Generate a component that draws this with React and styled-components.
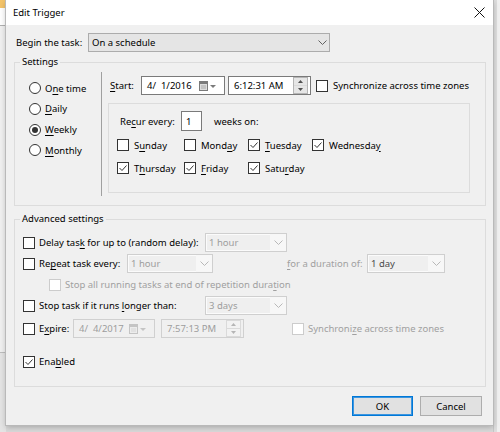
import styled, { createGlobalStyle } from "styled-components";

const GlobalStyle = createGlobalStyle`
  html, body { margin: 0; padding: 0; }
  body {
    font-family: "Noto Sans", Lato, sans-serif;
    font-size: 9.5px;
    color: #000;
    background: #d9d9d9;
  }
`;

const Screen = styled.div`
  width: 500px;
  height: 432px;
  display: flex;
  align-items: flex-start;
  overflow: hidden;
  background: #d9d9d9;
`;

const LeftStrip = styled.div`
  width: 6px;
  height: 432px;
  flex: none;
  background: linear-gradient(#f4c46a 0 8px, #fff 8px 25px, #b0b0b0 25px 26px, #f0f0f0 26px 352px, #bdbdbd 352px 353px, #e4e4e4 353px);
`;

const RightStrip = styled.div`
  width: 7px;
  height: 432px;
  flex: none;
  background: linear-gradient(90deg, #c8c8c8 0 1px, #dedede 1px 4px, #f0f0f0 4px);
`;

const Window = styled.div`
  width: 487px;
  height: 425px;
  flex: none;
  display: flex;
  flex-direction: column;
  background: #f0f0f0;
  box-shadow: 0 0 0 1px #b9b9b9, 0 2px 6px rgba(0, 0, 0, 0.25);
  position: relative;
`;

const TitleBar = styled.div`
  height: 25px;
  flex: none;
  background: #fff;
  display: flex;
  align-items: center;
  justify-content: space-between;
  padding: 0 8px 0 7px;
`;

const Body = styled.div`
  flex: 1;
  display: flex;
  flex-direction: column;
  padding: 8px 7px 9px 8px;
`;

const Row = styled.div`
  display: flex;
  align-items: center;
  height: ${({ $h }) => $h || 21}px;
  margin-top: ${({ $mt }) => $mt || 0}px;
  padding-left: ${({ $pl }) => $pl || 0}px;
  flex: none;
`;

const Text = styled.span`
  display: inline-block;
  white-space: pre;
  color: ${({ $dim }) => ($dim ? "#a0a0a0" : "#000")};
  width: ${({ $w }) => ($w ? `${$w}px` : "auto")};
  margin-left: ${({ $ml }) => $ml || 0}px;
  flex: none;
`;

const U = styled.span`
  text-decoration: underline;
  text-underline-offset: 2px;
`;

const Combo = styled.div`
  box-sizing: border-box;
  width: ${({ $w }) => $w}px;
  height: 19px;
  flex: none;
  display: flex;
  align-items: center;
  margin-left: ${({ $ml }) => $ml || 0}px;
  border: 1px solid ${({ $disabled }) => ($disabled ? "#cfcfcf" : "#acacac")};
  background: ${({ $disabled }) => ($disabled ? "#efefef" : "#e5e5e5")};
  box-shadow: ${({ $disabled }) => ($disabled ? "inset 0 0 0 1px #fbfbfb" : "none")};
  color: ${({ $tone }) => $tone};
  padding-left: 3px;
`;

const ComboValue = styled.span`
  flex: 1;
  white-space: pre;
`;

const ComboButton = styled.span`
  width: ${({ $disabled }) => ($disabled ? 16 : 14)}px;
  height: 100%;
  display: flex;
  align-items: center;
  justify-content: center;
  background: ${({ $disabled }) => ($disabled ? "#f7f7f7" : "transparent")};
`;

const Field = styled.div`
  box-sizing: border-box;
  width: ${({ $w }) => $w}px;
  height: 19px;
  flex: none;
  display: flex;
  align-items: center;
  margin-left: ${({ $ml }) => $ml || 0}px;
  border: 1px solid ${({ $disabled }) => ($disabled ? "#d0d0d0" : "#7a7a7a")};
  background: ${({ $disabled }) => ($disabled ? "#f0f0f0" : "#fff")};
  color: ${({ $disabled }) => ($disabled ? "#9d9d9d" : "#000")};
  padding-left: 5px;
`;

const FieldValue = styled.span`
  flex: 1;
  white-space: pre;
`;

const Spinner = styled.span`
  width: 13px;
  height: 15px;
  margin-right: 2px;
  display: flex;
  flex-direction: column;
  border: 1px solid ${({ $disabled }) => ($disabled ? "#dadada" : "#b5b5b5")};
  background: ${({ $disabled }) => ($disabled ? "#f2f2f2" : "#e6e6e6")};
`;

const SpinHalf = styled.span`
  flex: 1;
  display: flex;
  align-items: center;
  justify-content: center;
  & + & {
    border-top: 1px solid ${({ $disabled }) => ($disabled ? "#dadada" : "#b5b5b5")};
  }
`;

const Box = styled.span`
  box-sizing: border-box;
  width: 12px;
  height: 12px;
  flex: none;
  display: flex;
  align-items: center;
  justify-content: center;
  margin-left: ${({ $ml }) => $ml || 0}px;
  border: 1px solid ${({ $disabled }) => ($disabled ? "#cccccc" : "#333")};
  background: #fff;
`;

const Round = styled.span`
  box-sizing: border-box;
  width: 12px;
  height: 12px;
  flex: none;
  border-radius: 50%;
  border: 1px solid #333;
  background: #fff;
  display: flex;
  align-items: center;
  justify-content: center;
  &::after {
    content: "";
    width: 6px;
    height: 6px;
    border-radius: 50%;
    background: ${({ $on }) => ($on ? "#333" : "transparent")};
  }
`;

const Group = styled.div`
  position: relative;
  box-sizing: border-box;
  flex: none;
  height: ${({ $h }) => $h}px;
  margin-top: ${({ $mt }) => $mt}px;
  border: 1px solid #dcdcdc;
`;

const GroupTitle = styled.span`
  position: absolute;
  top: -8px;
  left: 5px;
  padding: 0 2px;
  line-height: 14px;
  background: #f0f0f0;
`;

const SettingsInner = styled.div`
  display: flex;
  align-items: flex-start;
  height: 100%;
`;

const RadioColumn = styled.div`
  width: 72px;
  padding: 15px 0 0 14px;
  display: flex;
  flex-direction: column;
`;

const RadioRow = styled.label`
  height: 20.67px;
  display: flex;
  align-items: center;
  gap: 4px;
`;

const Divider = styled.div`
  width: 1px;
  height: 124px;
  margin-top: 9px;
  background: #a0a0a0;
  flex: none;
`;

const RightPane = styled.div`
  flex: 1;
  padding: 13px 0 0 6px;
  display: flex;
  flex-direction: column;
`;

const Panel = styled.div`
  box-sizing: border-box;
  width: 362px;
  height: 90px;
  margin-top: 8px;
  border: 1px solid #dcdcdc;
  padding: 7px 0 0 8px;
  display: flex;
  flex-direction: column;
`;

const NumberBox = styled.span`
  box-sizing: border-box;
  width: 21px;
  height: 20px;
  border: 1px solid #7a7a7a;
  background: #fff;
  padding-left: 4px;
  display: flex;
  align-items: center;
`;

const DayGrid = styled.div`
  display: grid;
  grid-template-columns: 67px 64px 64px auto;
  grid-auto-rows: 20px;
  row-gap: 3px;
  margin-top: 4px;
`;

const Day = styled.label`
  display: flex;
  align-items: center;
  gap: 5px;
`;

const AdvancedInner = styled.div`
  padding: 12px 0 0 8px;
  display: flex;
  flex-direction: column;
`;

const Footer = styled.div`
  display: flex;
  justify-content: flex-end;
  gap: 7px;
  margin-top: 9px;
  padding-right: 4px;
`;

const Button = styled.button`
  box-sizing: border-box;
  width: ${({ $w }) => $w}px;
  height: 20px;
  font: inherit;
  color: #000;
  background: #e1e1e1;
  border: 1px solid ${({ $primary }) => ($primary ? "#0078d7" : "#adadad")};
  box-shadow: ${({ $primary }) => ($primary ? "inset 0 0 0 1px #3c95df" : "none")};
  padding: 0;
`;

function Chevron({ color = "#606060" }) {
  return (
    <svg width="9" height="5" viewBox="0 0 9 5">
      <path d="M0.5 0.5 L4.5 4.5 L8.5 0.5" fill="none" stroke={color} strokeWidth="1" />
    </svg>
  );
}

function ComboBox({ w, value, disabled, tone, ml }) {
  return (
    <Combo $w={w} $disabled={disabled} $tone={tone || (disabled ? "#9d9d9d" : "#000")} $ml={ml}>
      <ComboValue>{value}</ComboValue>
      <ComboButton $disabled={disabled}>
        <Chevron color={disabled ? "#b8b8b8" : "#606060"} />
      </ComboButton>
    </Combo>
  );
}

function DateField({ w, value, disabled, ml }) {
  const c = disabled ? "#c4c4c4" : "#7a7a7a";
  return (
    <Field $w={w} $disabled={disabled} $ml={ml}>
      <FieldValue>{value}</FieldValue>
      <svg width="18" height="12" viewBox="0 0 18 12" style={{ marginRight: 7 }}>
        <rect x="0.5" y="1.5" width="8" height="9" fill={disabled ? "#ececec" : "#dcdcdc"} stroke={c} />
        <rect x="1" y="2" width="7" height="2" fill={c} />
        <path d="M2 6h5M2 8h5" stroke={disabled ? "#d6d6d6" : "#a8a8a8"} />
        <path d="M11 5 L17 5 L14 8 Z" fill={c} />
      </svg>
    </Field>
  );
}

function TimeField({ w, value, disabled, ml }) {
  const c = disabled ? "#b5b5b5" : "#505050";
  return (
    <Field $w={w} $disabled={disabled} $ml={ml}>
      <FieldValue>{value}</FieldValue>
      <Spinner $disabled={disabled}>
        <SpinHalf $disabled={disabled}>
          <svg width="5" height="3" viewBox="0 0 5 3"><path d="M0 3 L2.5 0 L5 3 Z" fill={c} /></svg>
        </SpinHalf>
        <SpinHalf $disabled={disabled}>
          <svg width="5" height="3" viewBox="0 0 5 3"><path d="M0 0 L2.5 3 L5 0 Z" fill={c} /></svg>
        </SpinHalf>
      </Spinner>
    </Field>
  );
}

function Check({ checked, disabled, ml }) {
  return (
    <Box $disabled={disabled} $ml={ml}>
      {checked && (
        <svg width="10" height="10" viewBox="0 0 10 10">
          <path d="M1.5 5 L4 7.5 L8.5 2.5" fill="none" stroke="#333" strokeWidth="1" />
        </svg>
      )}
    </Box>
  );
}

const days = [
  { key: "sun", label: <>S<U>u</U>nday</>, on: false },
  { key: "mon", label: <>Mond<U>a</U>y</>, on: false },
  { key: "tue", label: <><U>T</U>uesday</>, on: true },
  { key: "wed", label: <>Wednesda<U>y</U></>, on: true },
  { key: "thu", label: <>T<U>h</U>ursday</>, on: true },
  { key: "fri", label: <><U>F</U>riday</>, on: true },
  { key: "sat", label: <>Satu<U>r</U>day</>, on: true },
];

const schedules = [
  { key: "one", label: <>O<U>n</U>e time</>, on: false },
  { key: "day", label: <><U>D</U>aily</>, on: false },
  { key: "week", label: <><U>W</U>eekly</>, on: true },
  { key: "month", label: <><U>M</U>onthly</>, on: false },
];

export default function App() {
  return (
    <>
      <GlobalStyle />
      <Screen>
        <LeftStrip />
        <Window>
          <TitleBar>
            <span>Edit Trigger</span>
            <svg width="11" height="11" viewBox="0 0 11 11">
              <path d="M0.5 0.5 L10.5 10.5 M10.5 0.5 L0.5 10.5" stroke="#111" strokeWidth="1" />
            </svg>
          </TitleBar>
          <Body>
            <Row $h={19}>
              <Text $w={72} $ml={2}>Begin the task:</Text>
              <ComboBox w={242} value="On a schedule" />
            </Row>

            <Group $h={144} $mt={10}>
              <GroupTitle>Settings</GroupTitle>
              <SettingsInner>
                <RadioColumn>
                  {schedules.map((s) => (
                    <RadioRow key={s.key}>
                      <Round $on={s.on} />
                      <Text>{s.label}</Text>
                    </RadioRow>
                  ))}
                </RadioColumn>
                <Divider />
                <RightPane>
                  <Row $h={19} $pl={2}>
                    <Text $w={31}><U>S</U>tart:</Text>
                    <DateField w={84} value="4/  1/2016" />
                    <TimeField w={83} ml={3} value="6:12:31 AM" />
                    <Check ml={5} />
                    <Text $ml={5}>Synchronize across time zones</Text>
                  </Row>
                  <Panel>
                    <Row $h={20} $pl={3}>
                      <Text $w={61}>Re<U>c</U>ur every:</Text>
                      <NumberBox>1</NumberBox>
                      <Text $ml={12}>weeks on:</Text>
                    </Row>
                    <DayGrid>
                      {days.map((d) => (
                        <Day key={d.key}>
                          <Check checked={d.on} />
                          <Text>{d.label}</Text>
                        </Day>
                      ))}
                    </DayGrid>
                  </Panel>
                </RightPane>
              </SettingsInner>
            </Group>

            <Group $h={168} $mt={13}>
              <GroupTitle>Advanced settings</GroupTitle>
              <AdvancedInner>
                <Row>
                  <Check />
                  <Text $w={166} $ml={4}>Delay tas<U>k</U> for up to (random delay):</Text>
                  <ComboBox w={82} value="1 hour" disabled />
                </Row>
                <Row>
                  <Check />
                  <Text $w={88} $ml={4}>Re<U>p</U>eat task every:</Text>
                  <ComboBox w={86} value="1 hour" disabled />
                  <Text $dim $w={80} $ml={74}><U>f</U>or a duration of:</Text>
                  <ComboBox w={78} value="1 day" disabled tone="#4a4a4a" />
                </Row>
                <Row $pl={26}>
                  <Check disabled />
                  <Text $dim $ml={4}>Stop all running tasks at end of repetition dura<U>t</U>ion</Text>
                </Row>
                <Row>
                  <Check />
                  <Text $w={166} $ml={4}>Stop task if it runs <U>l</U>onger than:</Text>
                  <ComboBox w={82} value="3 days" disabled />
                </Row>
                <Row $mt={2}>
                  <Check />
                  <Text $w={34} $ml={4}>E<U>x</U>pire:</Text>
                  <DateField w={82} value="4/  4/2017" disabled />
                  <TimeField w={83} ml={6} value="7:57:13 PM" disabled />
                  <Check disabled ml={48} />
                  <Text $dim $ml={4}>Synchroni<U>z</U>e across time zones</Text>
                </Row>
                <Row $mt={12}>
                  <Check checked />
                  <Text $ml={4}>Ena<U>b</U>led</Text>
                </Row>
              </AdvancedInner>
            </Group>

            <Footer>
              <Button $w={61} $primary>OK</Button>
              <Button $w={62}>Cancel</Button>
            </Footer>
          </Body>
        </Window>
        <RightStrip />
      </Screen>
    </>
  );
}
